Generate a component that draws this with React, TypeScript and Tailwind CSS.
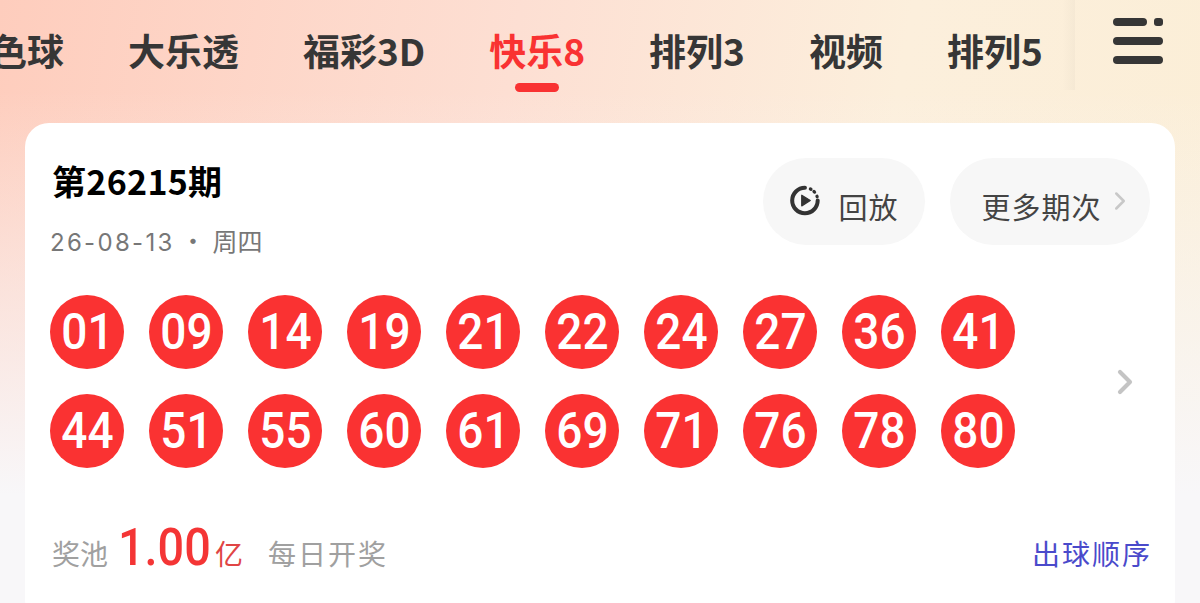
import React from "react";
import { ChevronRight } from "lucide-react";

const cjk = "font-['Noto_Sans_CJK_SC','Noto_Sans',sans-serif]";
const row1 = ["01", "09", "14", "19", "21", "22", "24", "27", "36", "41"];
const row2 = ["44", "51", "55", "60", "61", "69", "71", "76", "78", "80"];
const tabs = ["双色球", "大乐透", "福彩3D", "快乐8", "排列3", "视频", "排列5"];

function Ball({ n }: { n: string }) {
  return (
    <div className="flex h-[74px] w-[74px] items-center justify-center rounded-full bg-[#fa3232]">
      <span className="scale-x-[0.92] font-['Roboto',sans-serif] text-[50px] font-[500] leading-none text-white">{n}</span>
    </div>
  );
}

function Replay() {
  return (
    <svg width="34" height="34" viewBox="0 0 32 32" fill="none" className="-mt-[4px]">
      <path d="M15 4.5A12 12 0 1 0 27 16.5" stroke="#333" strokeWidth="3.8" strokeLinecap="round" />
      <path d="M20.1 5.6l.6.3M23.5 8l.6.6M26.3 12.4l.2.6" stroke="#333" strokeWidth="3" strokeLinecap="round" />
      <path d="M12 11.5v10l8-5z" fill="#333" stroke="#333" strokeWidth="1.2" strokeLinejoin="round" />
    </svg>
  );
}

export default function App() {
  return (
    <div className={`h-[603px] w-[1200px] overflow-hidden bg-[linear-gradient(180deg,transparent_0%,transparent_15%,#f8f7f9_82%),linear-gradient(100deg,#fecdbd_0%,#fddfd3_40%,#fcefdc_70%,#fbeed6_100%)] ${cjk}`}>
      <header className="flex h-[123px]">
        <nav className="flex h-full w-[1062px] gap-[64px] overflow-hidden pt-[27px]">
          {tabs.map((t, i) => (
            <div key={t} className={`flex shrink-0 flex-col items-center ${i === 0 ? "-ml-[47px]" : ""}`}>
              <span className={`text-[37px] font-bold leading-[46px] ${t === "快乐8" ? "text-[#f93232]" : "text-[#363636]"}`}>{t}</span>
              {t === "快乐8" && <span className="mt-[10px] h-[9px] w-[44px] rounded-full bg-[#f93232]" />}
            </div>
          ))}
        </nav>
        <div className="h-[90px] w-[13px] bg-gradient-to-r from-transparent to-black/[0.025]" />
        <div className="flex flex-1 justify-center pt-[18px]">
          <div className="flex h-fit w-[50px] flex-col gap-[11px]">
            <div className="flex gap-[7px]">
              <span className="h-[8px] flex-1 rounded-full bg-[#363636]" />
              <span className="h-[8px] w-[9px] rounded-[3px] bg-[#363636]" />
            </div>
            <span className="h-[8px] rounded-full bg-[#363636]" />
            <span className="h-[8px] rounded-full bg-[#363636]" />
          </div>
        </div>
      </header>

      <main className="mx-[25px] h-[500px] rounded-[24px] bg-white pl-[25px] pr-[25px]">
        <div className="flex justify-between">
          <div className="pl-[2px] pt-[35px]">
            <h1 className="text-[34px] font-bold leading-[46px] tracking-[0.3px] text-black">第26215期</h1>
            <p className="-ml-[2px] mt-[20px] flex h-[32px] items-center text-[25px] leading-[32px] text-[#777]">
              <span className="mt-[5px] font-['Inter',sans-serif] text-[24px] tracking-[2.3px]">26-08-13</span>
              <span className="ml-[6px]">·</span>
              <span className="ml-[7px]">周四</span>
            </p>
          </div>
          <div className="flex gap-[25px] pt-[35px]">
            <button className="flex h-[87px] w-[162px] items-center justify-center gap-[15px] rounded-full bg-[#f7f7f7] text-[29px] tracking-[1px] text-[#444]">
              <Replay />
              <span className="mt-[10px]">回放</span>
            </button>
            <button className="flex h-[87px] w-[200px] items-center justify-center gap-[3px] rounded-full bg-[#f7f7f7] pl-[16px] text-[29px] tracking-[1px] text-[#444]">
              <span className="mt-[10px]">更多期次</span>
              <ChevronRight size={30} strokeWidth={2} className="-mt-[2px] text-[#c8c8c8]" />
            </button>
          </div>
        </div>

        <div className="mt-[39px] flex items-center justify-between">
          <div className="flex flex-col gap-[25px]">
            <div className="flex gap-[25px]">{row1.map((n) => <Ball key={n} n={n} />)}</div>
            <div className="flex gap-[25px]">{row2.map((n) => <Ball key={n} n={n} />)}</div>
          </div>
          <ChevronRight size={40} strokeWidth={2.5} className="mr-[5px] text-[#c4c4c4]" />
        </div>

        <div className="mt-[50px] flex items-baseline justify-between">
          <div className="flex items-baseline pl-[2px] text-[#a0a0a0]">
            <span className="text-[28px]">奖池</span>
            <span className="ml-[10px] w-[90px] origin-left scale-x-[0.9] font-['Roboto',sans-serif] text-[52px] font-medium leading-[60px] text-[#f43535]">1.00</span>
            <span className="ml-[7px] text-[28px] text-[#e04545]">亿</span>
            <span className="ml-[25px] text-[28px] tracking-[2px]">每日开奖</span>
          </div>
          <span className="-mr-[2px] text-[28px] tracking-[2px] text-[#4a4acb]">出球顺序</span>
        </div>
      </main>
    </div>
  );
}
